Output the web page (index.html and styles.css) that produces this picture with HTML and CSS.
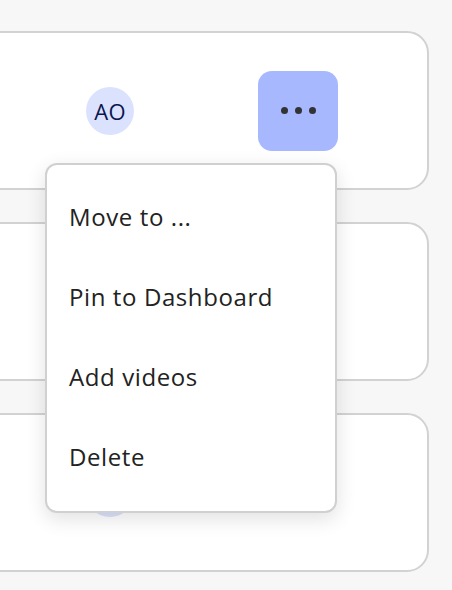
FILE: index.html
```html
<!DOCTYPE html>
<html>
<head>
<meta charset="utf-8">
<link rel="stylesheet" href="styles.css">
</head>
<body>
<div class="list">
  <div class="card">
    <div class="avatar">AO</div>
    <div class="more-wrap">
      <button class="more active"><span class="dot"></span><span class="dot"></span><span class="dot"></span></button>
      <div class="menu">
        <div class="item">Move to ...</div>
        <div class="item">Pin to Dashboard</div>
        <div class="item">Add videos</div>
        <div class="item">Delete</div>
      </div>
    </div>
  </div>
  <div class="card">
    <div class="avatar"></div>
    <div class="more-wrap">
      <button class="more"><span class="dot"></span><span class="dot"></span><span class="dot"></span></button>
    </div>
  </div>
  <div class="card">
    <div class="avatar"></div>
    <div class="more-wrap">
      <button class="more"><span class="dot"></span><span class="dot"></span><span class="dot"></span></button>
    </div>
  </div>
</div>
</body>
</html>
```
FILE: styles.css
```css
html, body {
  margin: 0;
  padding: 0;
  background: #f7f7f7;
  font-family: "Open Sans", Lato, sans-serif;
  overflow: hidden;
}
.list {
  display: flex;
  flex-direction: column;
  gap: 32px;
  padding: 31px 23px 0 0;
  margin-left: -60px;
}
.card {
  box-sizing: border-box;
  height: 159px;
  background: #fff;
  border: 2px solid #d2d2d2;
  border-radius: 22px;
  display: flex;
  align-items: center;
  justify-content: flex-end;
  padding-right: 89px;
  gap: 124px;
}
.avatar {
  width: 48px;
  height: 48px;
  border-radius: 50%;
  background: #dbe2fe;
  color: #0b1650;
  font-size: 22px;
  font-weight: 500;
  letter-spacing: 0.3px;
  display: flex;
  align-items: center;
  justify-content: center;
}
.more-wrap {
  position: relative;
}
.more {
  width: 80px;
  height: 80px;
  border: 0;
  border-radius: 14px;
  background: transparent;
  display: flex;
  align-items: center;
  justify-content: center;
  gap: 7px;
  padding: 0;
}
.more.active {
  background: #a7b8fe;
}
.dot {
  width: 7px;
  height: 7px;
  border-radius: 50%;
  background: #333;
}
.menu {
  position: absolute;
  top: 92px;
  right: 1px;
  width: 292px;
  box-sizing: border-box;
  background: #fff;
  border: 2px solid #d0d0d0;
  border-radius: 12px;
  padding: 12px 0 14px;
  box-shadow: 0 6px 20px rgba(0, 0, 0, 0.12);
  z-index: 5;
}
.item {
  height: 80px;
  line-height: 80px;
  padding-left: 22px;
  font-size: 24px;
  letter-spacing: 0.6px;
  color: #222;
}
```
